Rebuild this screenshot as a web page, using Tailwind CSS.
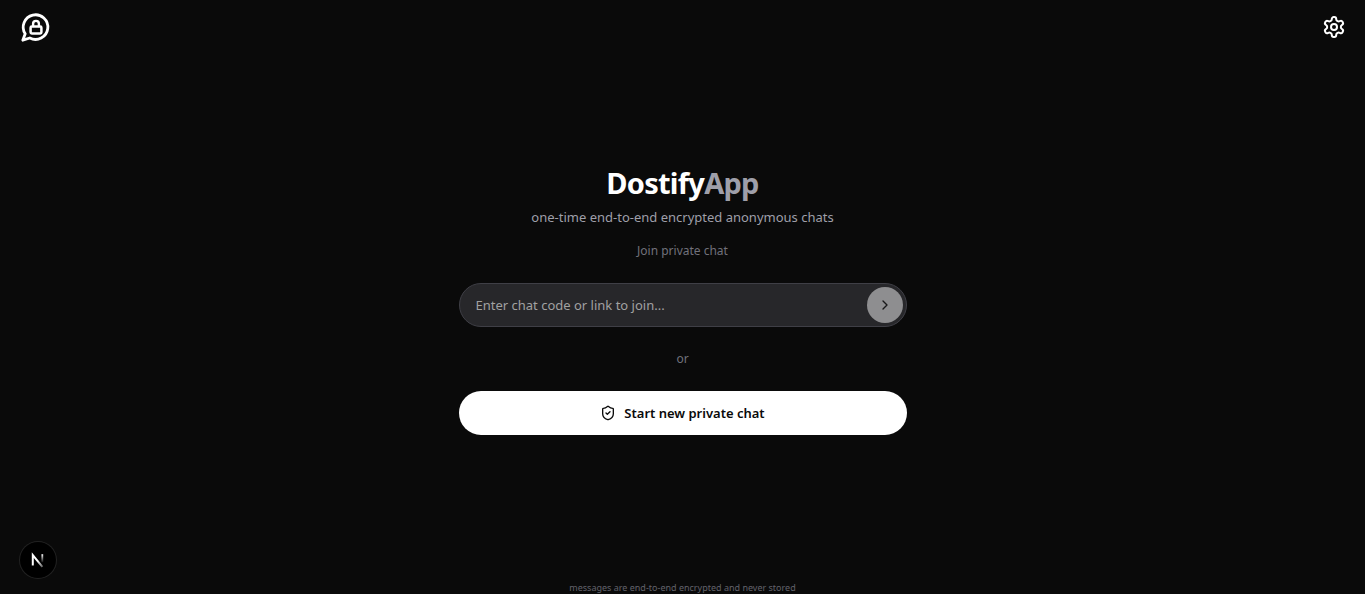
<!DOCTYPE html>
<html lang="en">
<head>
<meta charset="utf-8">
<meta name="viewport" content="width=device-width, initial-scale=1">
<title>DostifyApp</title>
<script src="https://cdn.jsdelivr.net/npm/@tailwindcss/browser@4"></script>
</head>
<body class="flex min-h-screen flex-col bg-[#0a0a0a] font-['Noto_Sans','Open_Sans',sans-serif] text-white">
<header class="flex h-[54px] items-center justify-between px-5">
  <a href="#" aria-label="DostifyApp home">
    <svg class="size-8" viewBox="0 0 32 32" fill="none" stroke="currentColor" stroke-width="2.8" stroke-linecap="round" stroke-linejoin="round" aria-hidden="true">
      <path d="M5.2 22.8A12.3 12.3 0 1 1 9.8 27L2.8 29.2Z"/>
      <rect x="10.6" y="15.6" width="10.8" height="6.8" rx="1.2" stroke-width="2.5"/>
      <path d="M13.1 15v-2.2a2.9 2.9 0 0 1 5.8 0V15" stroke-width="2.4"/>
    </svg>
  </a>
  <button type="button" aria-label="Settings" class="-mr-px">
    <svg class="size-6" viewBox="0 0 24 24" fill="none" stroke="currentColor" stroke-width="2" stroke-linecap="round" stroke-linejoin="round" aria-hidden="true">
      <path d="M12.22 2h-.44a2 2 0 0 0-2 2v.18a2 2 0 0 1-1 1.73l-.43.25a2 2 0 0 1-2 0l-.15-.08a2 2 0 0 0-2.73.73l-.22.38a2 2 0 0 0 .73 2.73l.15.1a2 2 0 0 1 1 1.72v.51a2 2 0 0 1-1 1.74l-.15.09a2 2 0 0 0-.73 2.73l.22.38a2 2 0 0 0 2.73.73l.15-.08a2 2 0 0 1 2 0l.43.25a2 2 0 0 1 1 1.73V20a2 2 0 0 0 2 2h.44a2 2 0 0 0 2-2v-.18a2 2 0 0 1 1-1.73l.43-.25a2 2 0 0 1 2 0l.15.08a2 2 0 0 0 2.73-.73l.22-.39a2 2 0 0 0-.73-2.73l-.15-.08a2 2 0 0 1-1-1.74v-.5a2 2 0 0 1 1-1.74l.15-.09a2 2 0 0 0 .73-2.73l-.22-.38a2 2 0 0 0-2.73-.73l-.15.08a2 2 0 0 1-2 0l-.43-.25a2 2 0 0 1-1-1.73V4a2 2 0 0 0-2-2z"/>
      <circle cx="12" cy="12" r="3"/>
    </svg>
  </button>
</header>
<main class="flex flex-1 flex-col items-center justify-center pb-9">
  <div class="flex w-full max-w-md flex-col items-center">
    <h1 class="text-[29px] leading-9 font-bold tracking-tight">Dostify<span class="text-[#9f9fa9]">App</span></h1>
    <p class="mt-1.5 text-[13px] leading-5 text-[#9f9fa9]">one-time end-to-end encrypted anonymous chats</p>
    <label for="code" class="mt-4 text-xs leading-4 text-[#71717b]">Join private chat</label>
    <form class="mt-6 flex h-11 w-full items-center rounded-full border border-[#3f3f46] bg-[#27272a] pr-[3px] pl-4">
      <input id="code" type="text" placeholder="Enter chat code or link to join..." class="min-w-0 flex-1 bg-transparent text-[13px] leading-5 outline-none placeholder:text-[#a1a1a1]">
      <button type="button" aria-label="Join chat" class="flex size-9 items-center justify-center rounded-full bg-[#8e8e90] text-[#19191a]">
        <svg class="size-4" viewBox="0 0 24 24" fill="none" stroke="currentColor" stroke-width="2" stroke-linecap="round" stroke-linejoin="round" aria-hidden="true"><path d="m9 18 6-6-6-6"/></svg>
      </button>
    </form>
    <p class="mt-6 text-xs leading-4 text-[#71717b]">or</p>
    <button type="button" class="mt-6 flex h-11 w-full items-center justify-center gap-2 rounded-full bg-white text-[13px] leading-5 font-semibold text-[#0a0a0a]">
      <svg class="size-4" viewBox="0 0 24 24" fill="none" stroke="currentColor" stroke-width="2" stroke-linecap="round" stroke-linejoin="round" aria-hidden="true"><path d="M20 13c0 5-3.5 7.5-7.66 8.95a1 1 0 0 1-.67-.01C7.5 20.5 4 18 4 13V6a1 1 0 0 1 1-1c2 0 4.5-1.2 6.24-2.72a1.17 1.17 0 0 1 1.52 0C14.51 3.81 17 5 19 5a1 1 0 0 1 1 1z"/><path d="m9 12 2 2 4-4"/></svg>
      Start new private chat
    </button>
  </div>
</main>
<footer class="text-center text-[9px] leading-3 text-[#62626b]">messages are end-to-end encrypted and never stored</footer>
<button type="button" aria-label="Open developer tools" class="fixed bottom-4 left-5 flex size-9 items-center justify-center rounded-full bg-black ring-1 ring-[#222222]">
  <svg class="size-9" viewBox="0 0 36 36" fill="none" aria-hidden="true">
    <defs>
      <linearGradient id="slant" gradientUnits="userSpaceOnUse" x1="19" y1="18" x2="24" y2="25"><stop stop-color="#fff"/><stop offset="1" stop-color="#fff" stop-opacity=".3"/></linearGradient>
      <linearGradient id="stem" gradientUnits="userSpaceOnUse" x1="22" y1="12" x2="22" y2="21"><stop stop-color="#fff"/><stop offset="1" stop-color="#fff" stop-opacity="0"/></linearGradient>
    </defs>
    <path d="M12.8 23.6V13l9.6 11.8" stroke="url(#slant)" stroke-width="2"/>
    <path d="M22.3 12.2v8.2" stroke="url(#stem)" stroke-width="1.8"/>
  </svg>
</button>
</body>
</html>
